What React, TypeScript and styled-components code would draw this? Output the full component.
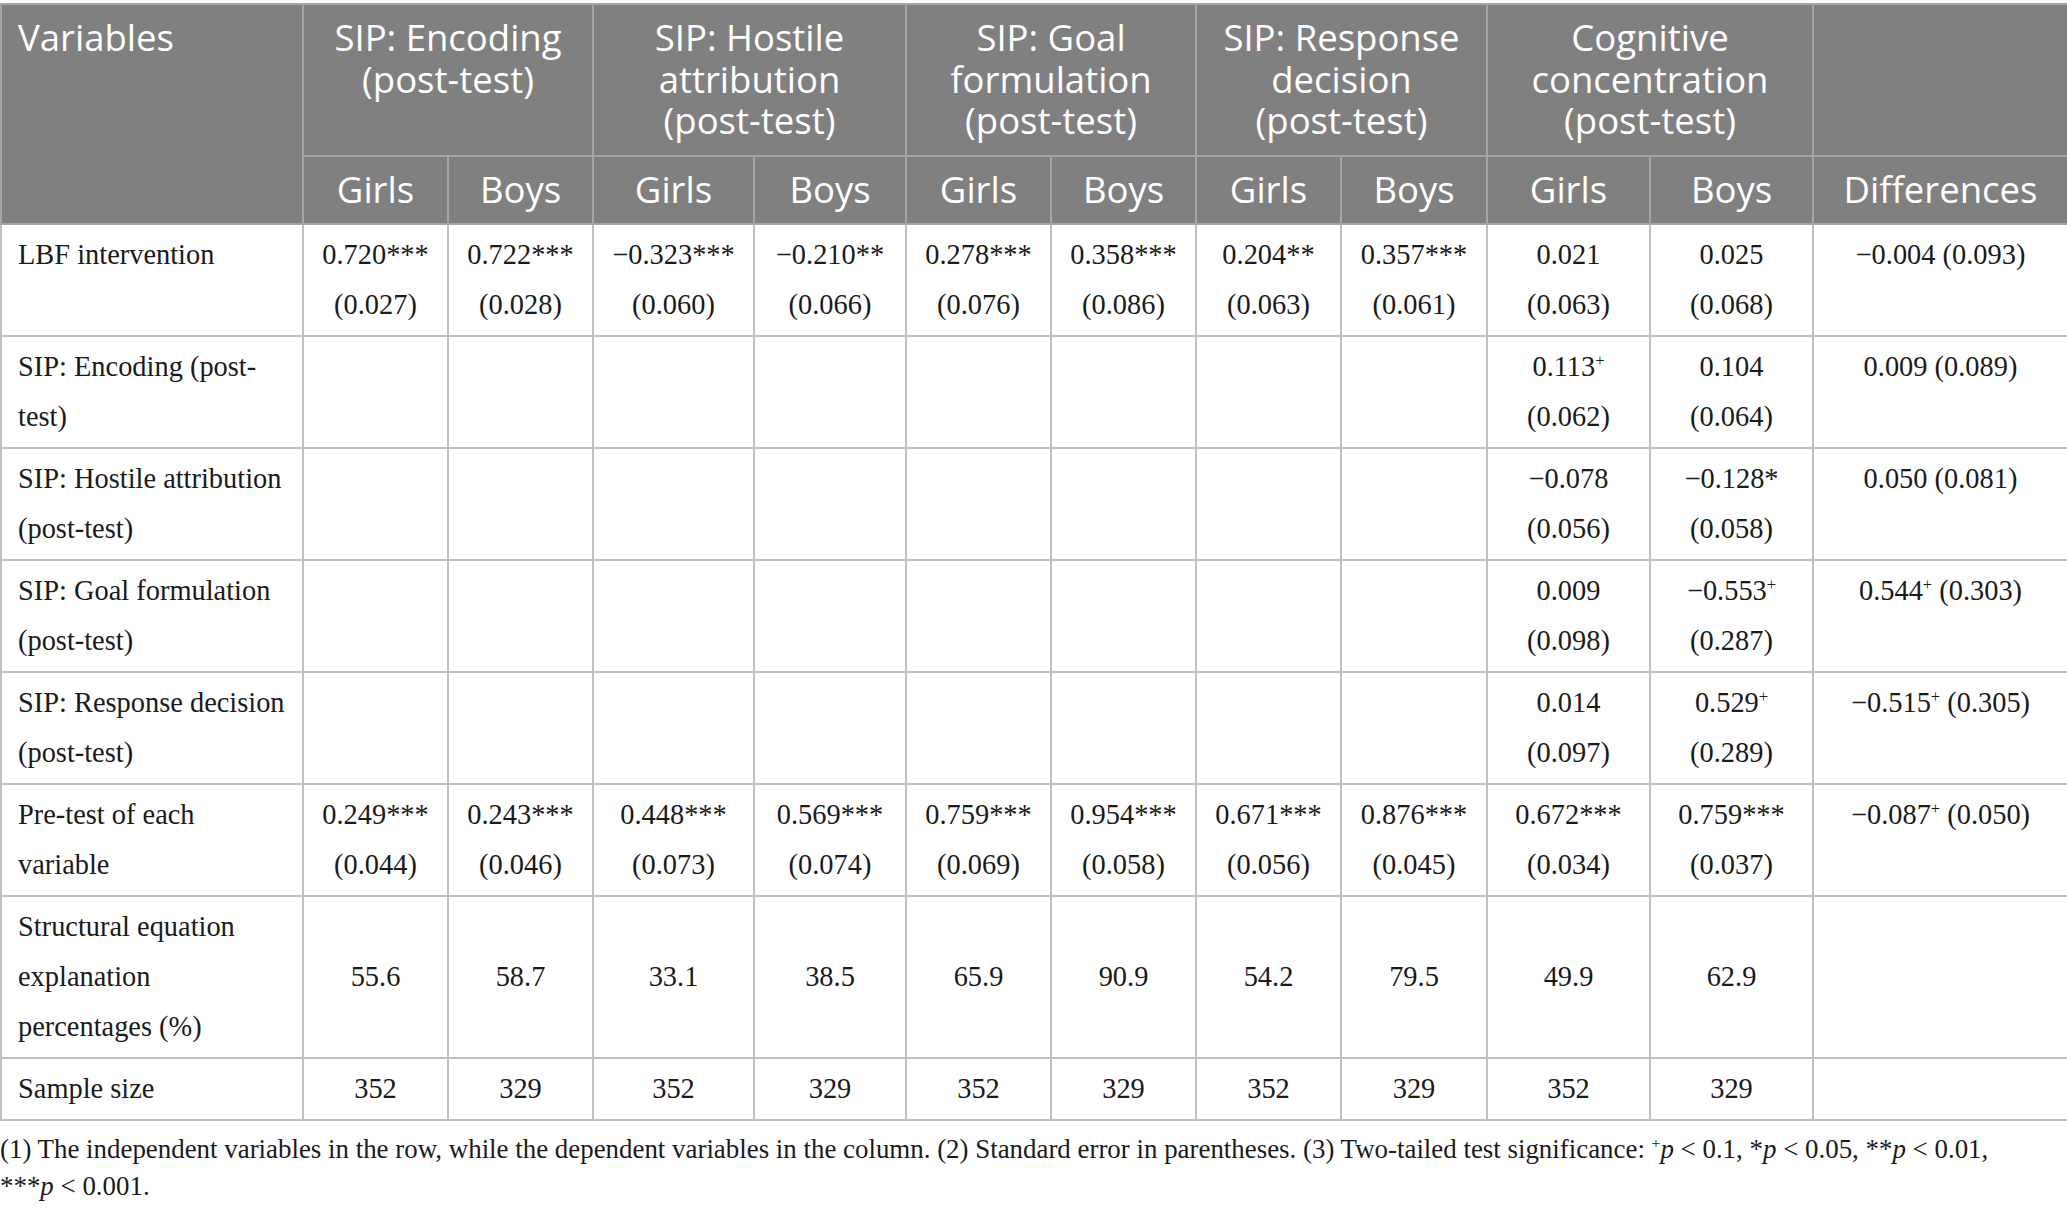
import React from "react";
import styled, { createGlobalStyle } from "styled-components";

const GlobalStyle = createGlobalStyle`
  html, body {
    margin: 0;
    padding: 0;
    background: #fff;
  }
`;

const Page = styled.div`
  padding-top: 3px;
  width: 2067px;
  font-family: "Liberation Serif", "Times New Roman", serif;
  color: #1a1a1a;
`;

const Table = styled.table`
  width: 2067px;
  table-layout: fixed;
  border-collapse: collapse;
  border: 2px solid #c0c0c0;
`;

const HeadCell = styled.th<{ $align?: "left" | "center" }>`
  background: #808080;
  color: #fff;
  font-family: "Open Sans", "Noto Sans", sans-serif;
  font-weight: 400;
  font-size: 36.5px;
  line-height: 41.5px;
  padding: 12px 16px 13px;
  text-align: ${(p) => p.$align ?? "center"};
  vertical-align: top;
  border: 2px solid #a6a6a6;
`;

const BodyCell = styled.td<{ $align?: "left" | "center"; $middle?: boolean }>`
  font-size: 28.4px;
  line-height: 50px;
  padding: 5px 16px;
  text-align: ${(p) => p.$align ?? "center"};
  vertical-align: ${(p) => (p.$middle ? "middle" : "top")};
  border: 2px solid #c0c0c0;
`;

const Line = styled.span`
  display: block;
  white-space: nowrap;
`;

const Sup = styled.span`
  font-size: 0.58em;
  line-height: 0;
  position: relative;
  top: -0.62em;
`;

const Note = styled.p`
  margin: 0;
  padding-top: 10px;
  font-size: 26.9px;
  line-height: 37px;
`;

const NoWrap = styled.span`
  white-space: nowrap;
`;

const Em = styled.i`
  font-style: italic;
`;

const widths = [302, 145, 145, 161, 152, 145, 145, 145, 146, 163, 163, 255];

const groups = [
  ["SIP: Encoding", "(post-test)"],
  ["SIP: Hostile", "attribution", "(post-test)"],
  ["SIP: Goal", "formulation", "(post-test)"],
  ["SIP: Response", "decision", "(post-test)"],
  ["Cognitive", "concentration", "(post-test)"],
];

type Row = {
  label: string[];
  cells: string[][];
  diff: string;
  middle?: boolean;
};

const blank: string[] = [];

const rows: Row[] = [
  {
    label: ["LBF intervention"],
    cells: [
      ["0.720***", "(0.027)"],
      ["0.722***", "(0.028)"],
      ["−0.323***", "(0.060)"],
      ["−0.210**", "(0.066)"],
      ["0.278***", "(0.076)"],
      ["0.358***", "(0.086)"],
      ["0.204**", "(0.063)"],
      ["0.357***", "(0.061)"],
      ["0.021", "(0.063)"],
      ["0.025", "(0.068)"],
    ],
    diff: "−0.004 (0.093)",
  },
  {
    label: ["SIP: Encoding (post-", "test)"],
    cells: [...Array(8).fill(blank), ["0.113+", "(0.062)"], ["0.104", "(0.064)"]],
    diff: "0.009 (0.089)",
  },
  {
    label: ["SIP: Hostile attribution", "(post-test)"],
    cells: [...Array(8).fill(blank), ["−0.078", "(0.056)"], ["−0.128*", "(0.058)"]],
    diff: "0.050 (0.081)",
  },
  {
    label: ["SIP: Goal formulation", "(post-test)"],
    cells: [...Array(8).fill(blank), ["0.009", "(0.098)"], ["−0.553+", "(0.287)"]],
    diff: "0.544+ (0.303)",
  },
  {
    label: ["SIP: Response decision", "(post-test)"],
    cells: [...Array(8).fill(blank), ["0.014", "(0.097)"], ["0.529+", "(0.289)"]],
    diff: "−0.515+ (0.305)",
  },
  {
    label: ["Pre-test of each", "variable"],
    cells: [
      ["0.249***", "(0.044)"],
      ["0.243***", "(0.046)"],
      ["0.448***", "(0.073)"],
      ["0.569***", "(0.074)"],
      ["0.759***", "(0.069)"],
      ["0.954***", "(0.058)"],
      ["0.671***", "(0.056)"],
      ["0.876***", "(0.045)"],
      ["0.672***", "(0.034)"],
      ["0.759***", "(0.037)"],
    ],
    diff: "−0.087+ (0.050)",
  },
  {
    label: ["Structural equation", "explanation", "percentages (%)"],
    cells: ["55.6", "58.7", "33.1", "38.5", "65.9", "90.9", "54.2", "79.5", "49.9", "62.9"].map((v) => [v]),
    diff: "",
    middle: true,
  },
  {
    label: ["Sample size"],
    cells: ["352", "329", "352", "329", "352", "329", "352", "329", "352", "329"].map((v) => [v]),
    diff: "",
  },
];

// "+" in the data marks a superscript significance sign
function Value({ text }: { text: string }) {
  const parts = text.split("+");
  return (
    <>
      {parts.map((part, i) => (
        <React.Fragment key={i}>
          {part}
          {i < parts.length - 1 && <Sup>+</Sup>}
        </React.Fragment>
      ))}
    </>
  );
}

export default function App() {
  return (
    <>
      <GlobalStyle />
      <Page>
        <Table>
          <colgroup>
            {widths.map((w, i) => (
              <col key={i} style={{ width: w }} />
            ))}
          </colgroup>
          <thead>
            <tr>
              <HeadCell rowSpan={2} $align="left">
                Variables
              </HeadCell>
              {groups.map((g, i) => (
                <HeadCell key={i} colSpan={2}>
                  {g.map((l) => (
                    <Line key={l}>{l}</Line>
                  ))}
                </HeadCell>
              ))}
              <HeadCell />
            </tr>
            <tr>
              {groups.map((_, i) => (
                <React.Fragment key={i}>
                  <HeadCell>Girls</HeadCell>
                  <HeadCell>Boys</HeadCell>
                </React.Fragment>
              ))}
              <HeadCell>Differences</HeadCell>
            </tr>
          </thead>
          <tbody>
            {rows.map((r, ri) => (
              <tr key={ri}>
                <BodyCell $align="left">
                  {r.label.map((l) => (
                    <Line key={l}>{l}</Line>
                  ))}
                </BodyCell>
                {r.cells.map((c, ci) => (
                  <BodyCell key={ci} $middle={r.middle}>
                    {c.map((v) => (
                      <Line key={v}>
                        <Value text={v} />
                      </Line>
                    ))}
                  </BodyCell>
                ))}
                <BodyCell>
                  {r.diff && (
                    <Line>
                      <Value text={r.diff} />
                    </Line>
                  )}
                </BodyCell>
              </tr>
            ))}
          </tbody>
        </Table>
        <Note>
          (1) The independent variables in the row, while the dependent variables in the column. (2) Standard error
          in parentheses. (3) Two-tailed test significance: <Sup>+</Sup>
          <Em>p</Em> &lt; 0.1, *<Em>p</Em> &lt; 0.05, **<Em>p</Em> &lt; 0.01,{" "}
          <NoWrap>
            ***<Em>p</Em> &lt; 0.001.
          </NoWrap>
        </Note>
      </Page>
    </>
  );
}
